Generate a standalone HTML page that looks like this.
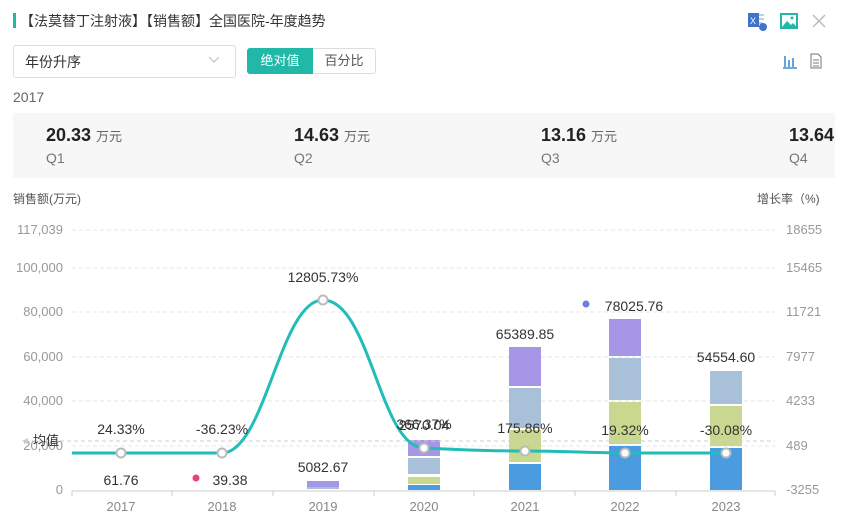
<!DOCTYPE html>
<html><head><meta charset="utf-8"><style>
body{margin:0;width:845px;height:524px;background:#fff;font-family:"Liberation Sans","Noto Sans CJK SC",sans-serif;overflow:hidden;position:relative;color:#333}
.a{position:absolute;white-space:nowrap}
</style></head><body>
<div class="a" style="left:13px;top:13px;width:3px;height:15px;background:#21b8a8"></div>
<div class="a" style="left:20px;top:11px;font-size:14px;color:#333">【法莫替丁注射液】【销售额】全国医院-年度趋势</div>
<svg class="a" style="left:748px;top:12px" width="20" height="20"><rect x="0" y="1" width="11" height="14" fill="#3f74c9"/><text x="2" y="12" font-size="9" fill="#fff" font-family="Liberation Sans">X</text><path d="M11 3h5M11 7h5M11 11h3" stroke="#7aa0dc"/><circle cx="15" cy="15" r="4" fill="#3f74c9"/></svg>
<svg class="a" style="left:780px;top:13px" width="18" height="16"><rect x="1" y="1" width="16" height="14" fill="none" stroke="#21b8a8" stroke-width="2"/><path d="M2 14l5-6 4 4 2-2 4 4z" fill="#21b8a8"/><circle cx="12" cy="5" r="1.5" fill="#21b8a8"/></svg>
<svg class="a" style="left:812px;top:14px" width="14" height="14"><path d="M1 1l12 12M13 1L1 13" stroke="#bbb" stroke-width="1.5"/></svg>
<div class="a" style="left:13px;top:45px;width:221px;height:31px;border:1px solid #ddd;border-radius:3px"></div>
<div class="a" style="left:25px;top:52px;font-size:14px">年份升序</div>
<svg class="a" style="left:208px;top:56px" width="12" height="8"><path d="M1 1l5 5 5-5" stroke="#bbb" fill="none"/></svg>
<div class="a" style="left:247px;top:48px;width:66px;height:26px;background:#21b8a8;border-radius:3px 0 0 3px;color:#fff;font-size:13px;line-height:26px;text-align:center">绝对值</div>
<div class="a" style="left:313px;top:48px;width:62px;height:24px;border:1px solid #ddd;border-left:none;border-radius:0 3px 3px 0;font-size:13px;line-height:24px;text-align:center;color:#555">百分比</div>
<svg class="a" style="left:782px;top:53px" width="16" height="16"><path d="M1 15h14M3 3v11M7 7v7M11 5v9" stroke="#3f8fd0" stroke-width="1.6" fill="none"/></svg>
<svg class="a" style="left:810px;top:53px" width="12" height="16"><path d="M1 1h7l3 3v11H1z" fill="none" stroke="#777"/><path d="M3 7h6M3 10h6M3 13h6" stroke="#777"/></svg>
<div class="a" style="left:13px;top:89px;font-size:14px;color:#666">2017</div>
<div class="a" style="left:13px;top:113px;width:822px;height:65px;background:#f7f7f7"></div>
<div class="a" style="left:46px;top:125px;font-size:18px;font-weight:bold;color:#222">20.33 <span style="font-size:13px;font-weight:normal;color:#666">万元</span></div>
<div class="a" style="left:46px;top:150px;font-size:14px;color:#777">Q1</div>
<div class="a" style="left:294px;top:125px;font-size:18px;font-weight:bold;color:#222">14.63 <span style="font-size:13px;font-weight:normal;color:#666">万元</span></div>
<div class="a" style="left:294px;top:150px;font-size:14px;color:#777">Q2</div>
<div class="a" style="left:541px;top:125px;font-size:18px;font-weight:bold;color:#222">13.16 <span style="font-size:13px;font-weight:normal;color:#666">万元</span></div>
<div class="a" style="left:541px;top:150px;font-size:14px;color:#777">Q3</div>
<div class="a" style="left:789px;top:125px;font-size:18px;font-weight:bold;color:#222">13.64</div>
<div class="a" style="left:789px;top:150px;font-size:14px;color:#777">Q4</div>
<div class="a" style="left:13px;top:190px;font-size:12px;color:#555">销售额(万元)</div>
<div class="a" style="left:757px;top:190px;font-size:12px;color:#555">增长率（%)</div>
<svg class="a" style="left:0;top:0" width="845" height="524" font-family="Liberation Sans" font-size="13">
<g stroke="#e6e6e6" stroke-dasharray="4,3"><path d="M72 230H775M72 268H775M72 312H775M72 357H775M72 401H775M72 446H775"/></g>
<g fill="#999" text-anchor="end"><text x="63" y="234">117,039</text><text x="63" y="272">100,000</text><text x="63" y="316">80,000</text><text x="63" y="361">60,000</text><text x="63" y="405">40,000</text><text x="63" y="450">20,000</text><text x="63" y="494">0</text></g>
<g fill="#999"><text x="786" y="234">18655</text><text x="786" y="272">15465</text><text x="786" y="316">11721</text><text x="786" y="361">7977</text><text x="786" y="405">4233</text><text x="786" y="450">489</text><text x="786" y="494">-3255</text></g>
<path d="M72 491H775" stroke="#ccc"/>
<g stroke="#ccc"><path d="M72 491v5M172 491v5M273 491v5M374 491v5M474 491v5M575 491v5M676 491v5M775 491v5"/></g>
<g fill="#888" text-anchor="middle"><text x="121" y="511">2017</text><text x="222" y="511">2018</text><text x="323" y="511">2019</text><text x="424" y="511">2020</text><text x="525" y="511">2021</text><text x="625" y="511">2022</text><text x="726" y="511">2023</text></g>
<g>
<rect x="307" y="481" width="32" height="6" fill="#a597e6"/><rect x="307" y="487" width="32" height="2" fill="#a8c1d9"/>
<rect x="408" y="485" width="32" height="5" fill="#4a9be0"/><rect x="408" y="477" width="32" height="7" fill="#c8d88f"/><rect x="408" y="458" width="32" height="16" fill="#a8c1d9"/><rect x="408" y="440" width="32" height="16" fill="#a597e6"/>
<rect x="509" y="464" width="32" height="26" fill="#4a9be0"/><rect x="509" y="430" width="32" height="32" fill="#c8d88f"/><rect x="509" y="388" width="32" height="40" fill="#a8c1d9"/><rect x="509" y="347" width="32" height="39" fill="#a597e6"/>
<rect x="609" y="446" width="32" height="44" fill="#4a9be0"/><rect x="609" y="402" width="32" height="42" fill="#c8d88f"/><rect x="609" y="358" width="32" height="42" fill="#a8c1d9"/><rect x="609" y="319" width="32" height="37" fill="#a597e6"/>
<rect x="710" y="448" width="32" height="42" fill="#4a9be0"/><rect x="710" y="406" width="32" height="40" fill="#c8d88f"/><rect x="710" y="371" width="32" height="33" fill="#a8c1d9"/>
</g>
<path d="M25 441H775" stroke="#ccc" stroke-dasharray="4,3"/>
<path d="M22 441l6-3v6z" fill="#ccc"/>
<text x="33" y="445" fill="#333" font-size="13">均值</text>
<path d="M72 453C100 453 110 453 121 453S200 453 222 453C265 453 280 300 323 300C370 300 380 448 424 448C470 450 490 451 525 451S600 453 625 453S700 453 726 453" stroke="#21bdb8" stroke-width="3" fill="none"/>
<g fill="#fff" stroke="#bbb" stroke-width="2"><circle cx="121" cy="453" r="4.5"/><circle cx="222" cy="453" r="4.5"/><circle cx="323" cy="300" r="4.5"/><circle cx="424" cy="448" r="4.5"/><circle cx="525" cy="451" r="4.5"/><circle cx="625" cy="453" r="4.5"/><circle cx="726" cy="453" r="4.5"/></g>
<g fill="#333" text-anchor="middle" font-size="14">
<text x="121" y="434">24.33%</text><text x="222" y="434">-36.23%</text><text x="323" y="282">12805.73%</text><text x="525" y="433">175.86%</text><text x="625" y="435">19.32%</text><text x="726" y="435">-30.08%</text>
<text x="424" y="429">366.37%</text><text x="424" y="430">2570.04</text>
<text x="121" y="485">61.76</text><text x="230" y="485">39.38</text><text x="323" y="472">5082.67</text><text x="525" y="339">65389.85</text><text x="634" y="311">78025.76</text><text x="726" y="362">54554.60</text>
</g>
<circle cx="196" cy="478" r="3.5" fill="#e8407a"/>
<circle cx="586" cy="304" r="3.5" fill="#6f7fe0"/>
</svg>
</body></html>
